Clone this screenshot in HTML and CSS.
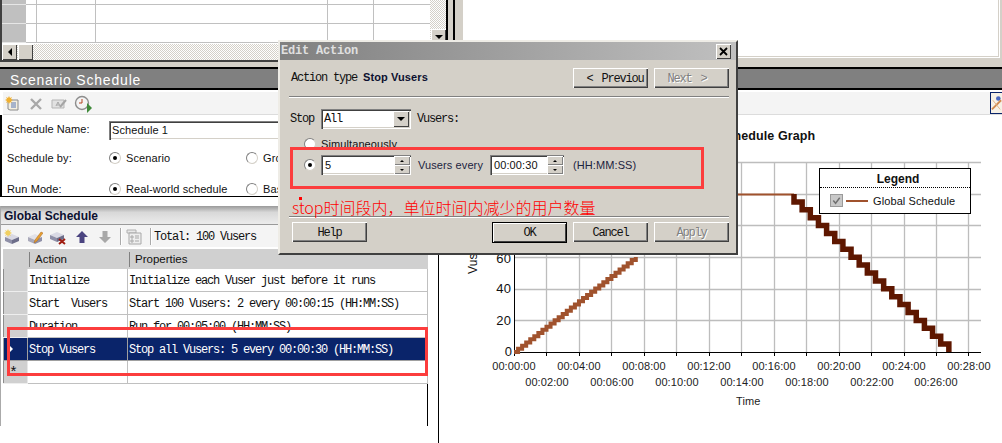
FILE: index.html
```html
<!DOCTYPE html>
<html lang="en">
<head>
    <meta charset="UTF-8">
    <title>Edit Action</title>
    <link rel="stylesheet" href="styles.css">
</head>
<body>
<div class="app">
    <!-- top panes, cut off by the screenshot -->
    <div class="top">
        <div class="sheet">
            <div class="sheet-view">
                <div class="sheet-grid">
                    <div class="sheet-row short"><i></i><b></b><b></b><b></b><b></b><b></b></div>
                    <div class="sheet-row"><i></i><b></b><b></b><b></b><b></b><b></b></div>
                    <div class="sheet-row"><i></i><b></b><b></b><b></b><b></b><b></b></div>
                </div>
                <div class="vscroll"><span class="scroll-btn"><em class="tri down"></em></span></div>
            </div>
            <div class="hscroll">
                <span class="scroll-btn"><em class="tri back"></em></span>
                <span class="scroll-btn thumb"></span>
            </div>
        </div>
        <div class="split"></div>
        <div class="blank"></div>
    </div>

    <div class="panel-title">Scenario Schedule</div>

    <div class="lower">
        <div class="left">
            <div class="toolbar">
                <svg class="ico first" viewBox="0 0 16 16"><path d="M3 4h10v10H5l-2-1z" fill="#f4efe0" stroke="#8a8a8a"/><path d="M6 7h5M6 9h5M6 11h5" stroke="#5b79b5"/><path d="M4 0l1 2 2-1-1 2 2 1-2 1 1 2-2-1-1 2-1-2-2 1 1-2-2-1 2-1-1-2 2 1z" fill="#f0b030"/></svg>
                <svg class="ico" viewBox="0 0 16 16"><path d="M3 3l10 10M13 3L3 13" stroke="#a9a9a9" stroke-width="2.4"/></svg>
                <svg class="ico" viewBox="0 0 16 16"><path d="M1 4h12v8H1z" fill="#e2e2e2" stroke="#b5b5b5"/><path d="M5 10l2-4 2 4M6 9h2" stroke="#a5a5a5" fill="none"/><path d="M9 11l6-7" stroke="#a5a5a5" stroke-width="2"/></svg>
                <svg class="ico wide" viewBox="0 0 18 18"><circle cx="8" cy="8" r="6.5" fill="#f4f4f4" stroke="#8d8d8d" stroke-width="1.4"/><path d="M8 4v4H5" stroke="#b3401f" fill="none"/><path d="M13 8l5 5-5 5z" fill="#3f8a3a"/></svg>
            </div>
            <div class="form">
                <div class="form-row name">
                    <label>Schedule Name:</label>
                    <div class="field sunken">Schedule 1</div>
                </div>
                <div class="form-row by">
                    <label>Schedule by:</label>
                    <span class="radio on"></span><span class="opt">Scenario</span>
                    <span class="radio"></span><span>Group</span>
                </div>
                <div class="form-row mode">
                    <label>Run Mode:</label>
                    <span class="radio on"></span><span class="opt">Real-world schedule</span>
                    <span class="radio"></span><span>Basic schedule</span>
                </div>
            </div>
            <div class="pane">
                <div class="pane-head">Global Schedule</div>
                <div class="toolbar small">
                    <svg class="ico first" viewBox="0 0 16 16"><path d="M1 8l7-3 7 3-7 3z" fill="#d9d9e4"/><path d="M1 8v4l7 3v-4z" fill="#8f90a8"/><path d="M15 8v4l-7 3v-4z" fill="#6d6e8a"/><path d="M4 0l1 2 2-1-1 2 2 1-2 1 1 2-2-1-1 2-1-2-2 1 1-2-2-1 2-1-1-2 2 1z" fill="#f0cf60"/></svg>
                    <svg class="ico" viewBox="0 0 16 16"><path d="M1 8l7-3 7 3-7 3z" fill="#e2e2e8"/><path d="M1 8v4l7 3v-4z" fill="#a9a9ba"/><path d="M15 8v4l-7 3v-4z" fill="#8f90a8"/><path d="M7 14l1-3 6-8 2 1-6 8z" fill="#e8a030" stroke="#a8641a" stroke-width=".5"/></svg>
                    <svg class="ico" viewBox="0 0 16 16"><path d="M0 6l7-3 7 3-7 3z" fill="#d9d9e4"/><path d="M0 6v4l7 3V9z" fill="#8f90a8"/><path d="M14 6v4l-7 3V9z" fill="#6d6e8a"/><path d="M9 10l6 5M15 10l-6 5" stroke="#a01c10" stroke-width="2"/></svg>
                    <svg class="ico arrow" viewBox="0 0 14 14"><path d="M7 1l6 6H9.500v6h-5V7H1z" fill="#4b4480"/></svg>
                    <svg class="ico arrow" viewBox="0 0 14 14"><path d="M4.500 1h5v6H13l-6 6-6-6h3.500z" fill="#a8a8a8"/></svg>
                    <span class="tool-sep"></span>
                    <svg class="ico page" viewBox="0 0 16 16"><path d="M1 1h9v3H1z" fill="#e8e8e8" stroke="#b0b0b0"/><path d="M3 4h12v11H3z" fill="#eee" stroke="#a8a8a8"/><path d="M5 7h2v2H5zM5 11h2v2H5zM9 7h4M9 9h4M9 12h4" stroke="#a8a8a8" fill="none"/></svg>
                    <span class="tool-sep"></span>
                    <span class="mono total">Total: 100 Vusers</span>
                </div>
                <table class="actions">
                    <tr class="head"><th class="rh"></th><th class="col-a"><span>Action</span></th><th><span>Properties</span></th></tr>
                    <tr><td class="rh"></td><td>Initialize</td><td>Initialize each Vuser just before it runs</td></tr>
                    <tr><td class="rh"></td><td>Start&nbsp; Vusers</td><td>Start 100 Vusers: 2 every 00:00:15 (HH:MM:SS)</td></tr>
                    <tr><td class="rh"></td><td>Duration</td><td>Run for 00:05:00 (HH:MM:SS)</td></tr>
                    <tr class="sel"><td class="rh"><em class="tri next"></em></td><td>Stop Vusers</td><td>Stop all Vusers: 5 every 00:00:30 (HH:MM:SS)</td></tr>
                    <tr><td class="rh star">*</td><td></td><td></td></tr>
                </table>
            </div>
        </div>

        <div class="right">
            <div class="toolbar wide-bar">
                <span class="bar-btn">
                    <svg viewBox="0 0 12 20"><circle cx="8" cy="5" r="2.500" fill="#4a68c0"/><path d="M1 17L11 7" stroke="#d08a50" stroke-width="2"/><path d="M2 7l8 10" stroke="#e0b080"/></svg>
                </span>
            </div>
            <svg class="chart" viewBox="439 115 563 328">
                <g class="grid">
                    <path d="M439 162.500H981M439 194.500H981M439 225.500H981M514 257.500H981M514 289.500H981M514 320.500H981"/>
                    <path d="M546.500 162V352M579.500 162V352M611.500 162V352M644.500 162V352M676.500 162V352M709.500 162V352M741.500 162V352M774.500 162V352M806.500 162V352M839.500 162V352M871.500 162V352M904.500 162V352M936.500 162V352M968.500 162V352"/>
                </g>
                <path class="axis" d="M514.500 162V356M514 352.500H981M546.500 352v4M579.500 352v4M611.500 352v4M644.500 352v4M676.500 352v4M709.500 352v4M741.500 352v4M774.500 352v4M806.500 352v4M839.500 352v4M871.500 352v4M904.500 352v4M936.500 352v4M968.500 352v4"/>
                <path class="rise" d="M514 352h4.060v-3.170h4.060v-3.170h4.060v-3.170h4.060v-3.170h4.060v-3.170h4.060v-3.170h4.060v-3.170h4.060v-3.170h4.060v-3.170h4.060v-3.170h4.060v-3.170h4.060v-3.170h4.060v-3.170h4.060v-3.170h4.060v-3.170h4.060v-3.170h4.060v-3.170h4.060v-3.170h4.060v-3.170h4.060v-3.170h4.060v-3.170h4.060v-3.170h4.060v-3.170h4.060v-3.170h4.060v-3.170h4.060v-3.170h4.060v-3.170h4.060v-3.170h4.060v-3.170h4.060v-3.170"/>
                <path class="flat" d="M640 194.500H794"/>
                <path class="fall" d="M794 194
                    v7.900h8.150 v7.900h8.150 v7.900h8.150 v7.900h8.150 v7.900h8.150
                    v7.900h8.150 v7.900h8.150 v7.900h8.150 v7.900h8.150 v7.900h8.150
                    v7.900h8.150 v7.900h8.150 v7.900h8.150 v7.900h8.150 v7.900h8.150
                    v7.900h8.150 v7.900h8.150 v7.900h8.150 v7.900h8.150 v7.900"/>
                <text class="title" x="718" y="140">Schedule Graph</text>
                <g class="y-labels">
                    <text x="511" y="263">60</text>
                    <text x="511" y="293">40</text>
                    <text x="511" y="325">20</text>
                    <text x="512" y="356">0</text>
                </g>
                <text class="y-name" transform="translate(477 274) rotate(-90)">Vusers</text>
                <g class="x-labels">
                    <text x="514" y="370">00:00:00</text>
                    <text x="579" y="370">00:04:00</text>
                    <text x="644" y="370">00:08:00</text>
                    <text x="709" y="370">00:12:00</text>
                    <text x="774" y="370">00:16:00</text>
                    <text x="839" y="370">00:20:00</text>
                    <text x="904" y="370">00:24:00</text>
                    <text x="969" y="370">00:28:00</text>
                    <text x="547" y="386">00:02:00</text>
                    <text x="612" y="386">00:06:00</text>
                    <text x="677" y="386">00:10:00</text>
                    <text x="742" y="386">00:14:00</text>
                    <text x="807" y="386">00:18:00</text>
                    <text x="872" y="386">00:22:00</text>
                    <text x="936" y="386">00:26:00</text>
                </g>
                <text class="x-name" x="736" y="405">Time</text>
            </svg>
        </div>
    </div>

    <div class="legend">
        <div class="legend-head">Legend</div>
        <div class="legend-row">
            <span class="check"><svg viewBox="0 0 12 12"><path d="M2.500 6l2.500 3 4.500-6" fill="none" stroke="#707070" stroke-width="1.600"/></svg></span>
            <span class="legend-line"></span>
            <span>Global Schedule</span>
        </div>
    </div>

    <!-- dialog -->
    <div class="dialog">
        <div class="dialog-title">
            <span>Edit Action</span>
            <span class="close">
                <svg viewBox="0 0 15 15"><path d="M4 4l7 7M11 4l-7 7" stroke="#000" stroke-width="1.800"/></svg>
            </span>
        </div>
        <div class="dialog-head">
            <div class="mono">Action type <strong>Stop Vusers</strong></div>
            <div class="btns">
                <button class="btn nav"><span>&lt;</span>Previou</button>
                <button class="btn nav off">Next<span>&gt;</span></button>
            </div>
        </div>
        <div class="sep"></div>
        <div class="row stop-row">
            <span class="mono">Stop</span>
            <div class="combo sunken mono">All<span class="combo-btn"><em class="tri down"></em></span></div>
            <span class="mono">Vusers:</span>
        </div>
        <div class="row simul-row">
            <span class="radio"></span><span>Simultaneously</span>
        </div>
        <div class="row count-row">
            <span class="radio on"></span>
            <div class="spin count sunken">5<span class="spin-btns"><span><em class="tri up tiny"></em></span><span><em class="tri down tiny"></em></span></span></div>
            <span class="every">Vusers every</span>
            <div class="spin time sunken">00:00:30<span class="spin-btns"><span><em class="tri up tiny"></em></span><span><em class="tri down tiny"></em></span></span></div>
            <span class="hint">(HH:MM:SS)</span>
        </div>
        <div class="sep low"></div>
        <div class="dialog-foot">
            <button class="btn">Help</button>
            <div class="btns">
                <button class="btn primary">OK</button>
                <button class="btn">Cancel</button>
                <button class="btn off">Apply</button>
            </div>
        </div>
    </div>

    <!-- red marks drawn on top of the screenshot -->
    <div class="mark mark-row"></div>
    <div class="mark mark-count"></div>
    <div class="note"><i></i>stop时间段内，单位时间内减少的用户数量</div>
</div>
</body>
</html>
```

FILE: styles.css
```css
* {
    box-sizing: border-box;
}
body {
    margin: 0;
    background: #fff;
    font-family: "Liberation Sans", Arial, sans-serif;
    font-size: 11px;
    letter-spacing: 0.1px;
    color: #111;
}
.app {
    position: relative;
    width: 1002px;
    height: 443px;
    overflow: hidden;
}
.mono {
    font-family: "Liberation Mono", "Courier New", monospace;
    font-size: 12px;
    letter-spacing: -1.2px;
}
.sunken {
    background: #fff;
    box-shadow: inset 1px 1px #808080, inset 2px 2px #404040, inset -1px -1px #fff, inset -2px -2px #d4d0c8;
}

/* triangles */
.tri {
    display: block;
    flex: none;
    width: 0;
    height: 0;
    border: 4px solid transparent;
}
.tri.down { border-top-color: #000; border-bottom-width: 0; }
.tri.up { border-bottom-color: #000; border-top-width: 0; }
.tri.back { border-right-color: #000; border-left-width: 0; }
.tri.next { border-left-color: #fff; border-right-width: 0; }
.tri.tiny { border-width: 2px; }
.tri.tiny.down { border-bottom-width: 0; }
.tri.tiny.up { border-top-width: 0; }

/* top panes */
.top {
    display: flex;
    height: 67px;
    background: #d4d0c8;
}
.sheet {
    width: 448px;
    height: 62px;
    background: #fff;
    border-left: 2px solid #404040;
    border-right: 2px solid #000;
    border-bottom: 2px solid #404040;
    display: flex;
    flex-direction: column;
}
.sheet-view {
    height: 44px;
    flex: none;
    display: flex;
}
.sheet-grid {
    width: 428px;
}
.sheet-row {
    display: flex;
    height: 19px;
    border-bottom: 1px solid #c0c0c0;
}
.sheet-row.short {
    height: 5px;
}
.sheet-row i {
    width: 24px;
    background: #c0c0c0;
    border-bottom: 1px solid #e6e6e6;
    margin-bottom: -1px;
}
.sheet-row b {
    width: 11px;
    border-right: 1px solid #c0c0c0;
}
.sheet-row b:nth-of-type(2) { width: 59px; }
.sheet-row b:nth-of-type(3) { width: 232px; }
.sheet-row b:nth-of-type(4) { width: 46px; }
.sheet-row b:nth-of-type(5) { width: 56px; border-right: 0; }
.vscroll {
    width: 16px;
    display: flex;
    flex-direction: column;
    justify-content: flex-end;
    align-items: flex-end;
    background: conic-gradient(#fff 25%, #d4d0c8 0 50%, #fff 0 75%, #d4d0c8 0) 0 0 / 2px 2px;
}
.hscroll {
    flex: 1;
    display: flex;
    background: conic-gradient(#fff 25%, #d4d0c8 0 50%, #fff 0 75%, #d4d0c8 0) 0 0 / 2px 2px;
}
.scroll-btn {
    width: 15px;
    height: 15px;
    display: flex;
    align-items: center;
    justify-content: center;
    background: #d4d0c8;
    box-shadow: inset 1px 1px #fff, inset -1px -1px #404040;
}
.hscroll .scroll-btn {
    height: 16px;
}
.thumb {
    margin-left: 1px;
}
.split {
    width: 7px;
    height: 62px;
    background: #d4d0c8;
    border-right: 2px solid #000;
}
.blank {
    width: 537px;
    height: 58px;
    margin-left: 8px;
    background: #fff;
    box-shadow: inset 0 -1px #fff, inset -1px 0 #fff, inset 0 -2px #d4d0c8, inset -2px 0 #d4d0c8;
}
.panel-title {
    height: 23px;
    padding: 3px 0 0 10px;
    background: #808080;
    border-top: 2px solid #000;
    border-bottom: 2px solid #000;
    color: #fff;
    font-size: 14px;
    line-height: 17px;
    letter-spacing: 0.8px;
}

/* lower part */
.lower {
    display: flex;
    height: 353px;
    padding-top: 2px;
}
.left {
    width: 439px;
    flex: none;
    border-right: 1px solid #000;
}
.right {
    flex: 1;
    min-width: 0;
}
.toolbar {
    display: flex;
    align-items: center;
    height: 23px;
    padding-top: 1px;
    background: #f4f4f4;
    border-bottom: 1px solid #dcdcdc;
    margin-left: 3px;
}
.toolbar.wide-bar {
    margin-left: 0;
    padding-top: 0;
    justify-content: flex-end;
}
.ico {
    width: 16px;
    height: 16px;
    margin-left: 7px;
    flex: none;
}
.ico.first {
    margin-left: 2px;
}
.ico.wide {
    width: 18px;
    height: 18px;
}
.bar-btn {
    width: 12px;
    height: 22px;
    border: 1px solid #0a246a;
    border-right: 0;
    background: #f6f1e6;
}
.bar-btn svg {
    display: block;
    width: 11px;
    height: 20px;
}
.form {
    height: 82px;
    padding-left: 5px;
    border-left: 2px solid #000;
    border-bottom: 1px solid #000;
    margin-right: -1px;
    background: #fff;
}
.form-row {
    display: flex;
    align-items: center;
}
.form-row label {
    width: 102px;
    flex: none;
}
.form-row.name {
    padding-top: 6px;
    height: 25px;
}
.form-row.name label {
    margin-top: -3px;
}
.field {
    width: 200px;
    height: 19px;
    padding: 3px 3px;
}
.form-row.by {
    margin-top: 12px;
}
.form-row.mode {
    margin-top: 19px;
}
.opt {
    width: 120px;
}
.radio {
    position: relative;
    flex: none;
    width: 12px;
    height: 12px;
    margin: 0 5px 0 0;
    border-radius: 50%;
    background: #fff;
    border: 1px solid #808080;
    border-right-color: #d4d0c8;
    border-bottom-color: #d4d0c8;
}
.radio.on::after {
    content: "";
    position: absolute;
    left: 3px;
    top: 3px;
    width: 4px;
    height: 4px;
    border-radius: 50%;
    background: #000;
}
.pane {
    margin-top: 9px;
    height: 220px;
    margin-right: 10px;
    border-right: 1px solid #000;
    border-left: 1px solid #aaa;
}
.pane-head {
    height: 18px;
    padding: 3px 0 0 3px;
    background: linear-gradient(#9a9a9a, #d8d8d8 35%, #ececec);
    font-size: 12px;
    font-weight: bold;
    letter-spacing: 0;
    color: #0c1030;
    line-height: 15px;
}
.toolbar.small {
    height: 23px;
    margin: 0 0 2px 0;
    border-top: 1px solid #9a9a9a;
    border-bottom: 0;
    padding: 1px 0 0 1px;
}
.ico.arrow {
    width: 14px;
    height: 14px;
    margin-left: 9px;
}
.tool-sep {
    width: 2px;
    height: 17px;
    margin-left: 8px;
    border-left: 1px solid #aaa;
    border-right: 1px solid #fff;
}
.ico.page {
    margin-left: 4px;
}
.total {
    margin-left: 2px;
}
.actions {
    margin-left: 2px;
    width: 425px;
    height: 134px;
    table-layout: fixed;
    border-collapse: collapse;
    font-family: "Liberation Mono", "Courier New", monospace;
    font-size: 12px;
    letter-spacing: -1.2px;
}
.actions th, .actions td {
    height: 23px;
    padding: 2px 0 0 1px;
    border: 1px solid #c0c0c0;
    text-align: left;
    white-space: nowrap;
    overflow: hidden;
}
.actions .rh {
    width: 24px;
    padding: 0;
    background: #d0d0d0;
    border-color: #8c8c8c #e8e8e8 #eeeeee #8c8c8c;
}
.actions .col-a {
    width: 100px;
}
.actions .head th {
    height: 19px;
    padding-top: 1px;
    background: #d0d0d0;
    border-color: #d0d0d0;
    font-family: "Liberation Sans", Arial, sans-serif;
    font-size: 11.5px;
    font-weight: normal;
    letter-spacing: 0;
}
.actions .head span {
    display: block;
    padding-left: 5px;
    border-left: 1px solid #808080;
    line-height: 15px;
}
.actions .sel td {
    background: #0a246a;
    color: #fff;
    border-color: #a0a0a0;
}
.actions .sel .rh {
    background: #0a246a;
    border-color: #a0a0a0;
}
.actions .sel .tri {
    margin-left: 5px;
}
.actions .star {
    font-size: 15px;
    padding: 6px 0 0 5px;
    line-height: 14px;
    vertical-align: top;
}

/* chart */
.chart {
    display: block;
    width: 563px;
    height: 328px;
    font-family: "Liberation Sans", Arial, sans-serif;
}
.grid path {
    fill: none;
    stroke: #bdbdbd;
    stroke-width: 1.3;
}
.axis {
    fill: none;
    stroke: #000;
}
.rise {
    fill: none;
    stroke: #a0522d;
    stroke-width: 4;
}
.flat {
    fill: none;
    stroke: #a0522d;
    stroke-width: 2;
}
.fall {
    fill: none;
    stroke: #5e1700;
    stroke-width: 5.5;
}
.chart .title {
    font-size: 12.5px;
    font-weight: bold;
    fill: #111;
}
.y-labels text {
    font-size: 13px;
    text-anchor: end;
    fill: #111;
}
.y-name {
    font-size: 12px;
    fill: #111;
}
.x-labels text {
    font-size: 11px;
    text-anchor: middle;
    fill: #222;
}
.x-name {
    font-size: 11px;
    fill: #222;
}
.legend {
    position: absolute;
    left: 819px;
    top: 168px;
    width: 152px;
    height: 46px;
    background: #fff;
    border: 1px solid #000;
}
.legend-head {
    height: 19px;
    padding-left: 6px;
    line-height: 21px;
    text-align: center;
    font-size: 12px;
    font-weight: bold;
    letter-spacing: 0;
    border-bottom: 1px dotted #000;
}
.legend-row {
    display: flex;
    align-items: center;
    height: 25px;
    padding-left: 10px;
}
.check {
    width: 13px;
    height: 13px;
    background: #c8c8c8;
    border: 1px solid #9a9a9a;
    margin-right: 3px;
}
.check svg {
    display: block;
}
.legend-line {
    width: 22px;
    height: 2px;
    background: #a0522d;
    margin-right: 5px;
}

/* dialog */
.dialog {
    position: absolute;
    left: 278px;
    top: 40px;
    width: 460px;
    height: 215px;
    background: #d4d0c8;
    border: 2px solid;
    border-color: #eeece6 #404040 #404040 #eeece6;
}
.dialog-title {
    display: flex;
    align-items: center;
    justify-content: space-between;
    height: 18px;
    padding: 0 5px 0 1px;
    background: linear-gradient(90deg, #808080, #c0c0c0);
    color: #e0e0e0;
    font-family: "Liberation Mono", "Courier New", monospace;
    font-size: 12px;
    font-weight: bold;
    letter-spacing: -0.2px;
}
.close {
    width: 15px;
    height: 15px;
    background: #d4d0c8;
    box-shadow: inset 1px 1px #fff, inset -1px -1px #404040;
}
.close svg {
    display: block;
}
.dialog-head {
    display: flex;
    align-items: center;
    justify-content: space-between;
    height: 36px;
    padding: 0 7px 0 11px;
}
.dialog-head strong {
    font-family: "Liberation Sans", Arial, sans-serif;
    font-size: 11px;
    letter-spacing: 0.1px;
    color: #0c1030;
}
.btns {
    display: flex;
    gap: 6px;
}
.btn {
    width: 75px;
    height: 20px;
    padding: 1px 0 0;
    border: 0;
    background: #d4d0c8;
    box-shadow: inset 1px 1px #fff, inset -1px -1px #404040, inset -2px -2px #808080;
    font-family: "Liberation Mono", "Courier New", monospace;
    font-size: 12px;
    letter-spacing: -1.2px;
    color: #111;
}
.btn.off {
    color: #808080;
    text-shadow: 1px 1px #fff;
}
.btn.primary {
    height: 21px;
    outline: 1px solid #000;
    outline-offset: -1px;
    box-shadow: inset 2px 2px #fff, inset -2px -2px #404040;
}
.nav span {
    margin: 0 9px;
}
.sep {
    height: 2px;
    margin: 0 7px 0 9px;
    background: #808080;
    border-bottom: 1px solid #fff;
}
.sep.low {
    margin-top: 41px;
}
.row {
    display: flex;
    align-items: center;
}
.stop-row {
    height: 20px;
    margin-top: 11px;
    padding-left: 10px;
}
.combo {
    position: relative;
    width: 90px;
    height: 20px;
    margin: 0 6px 0 7px;
    padding: 3px 3px;
    line-height: 14px;
}
.combo-btn {
    position: absolute;
    right: 2px;
    top: 2px;
    width: 16px;
    height: 16px;
    display: flex;
    align-items: center;
    justify-content: center;
    background: #d4d0c8;
    box-shadow: inset 1px 1px #fff, inset -1px -1px #404040;
}
.simul-row {
    height: 14px;
    margin-top: 8px;
    padding-left: 24px;
}
.count-row {
    height: 20px;
    margin-top: 4px;
    padding-left: 24px;
}
.spin {
    position: relative;
    height: 20px;
    padding: 3px 0 0 4px;
    line-height: 14px;
}
.spin.count {
    width: 90px;
}
.spin.time {
    width: 74px;
    margin-left: 7px;
}
.spin-btns {
    position: absolute;
    right: 1px;
    top: 1px;
    width: 16px;
    height: 18px;
    display: flex;
    flex-direction: column;
    background: #d4d0c8;
}
.spin-btns span {
    flex: 1;
    display: flex;
    align-items: center;
    justify-content: center;
    box-shadow: inset 1px 1px #fff, inset -1px -1px #808080;
}
.every {
    margin-left: 7px;
    color: #1c2440;
}
.hint {
    margin-left: 9px;
    color: #1c2440;
}
.dialog-foot {
    display: flex;
    justify-content: space-between;
    margin-top: 4px;
    padding: 0 7px 0 12px;
}

/* red marks */
.mark {
    position: absolute;
    border: 3px solid #fc3d3d;
}
.mark-row {
    left: 7px;
    top: 327px;
    width: 421px;
    height: 49px;
}
.mark-count {
    left: 290px;
    top: 147px;
    width: 414px;
    height: 42px;
}
.note {
    position: absolute;
    left: 292px;
    top: 196px;
    font-family: "Noto Sans CJK SC", "Liberation Sans", sans-serif;
    font-size: 16px;
    font-weight: 300;
    letter-spacing: 0;
    line-height: 22px;
    color: #f00;
    white-space: nowrap;
}
.note i {
    position: absolute;
    left: 7px;
    top: 1px;
    width: 3px;
    height: 3px;
    background: #f00;
}
```
